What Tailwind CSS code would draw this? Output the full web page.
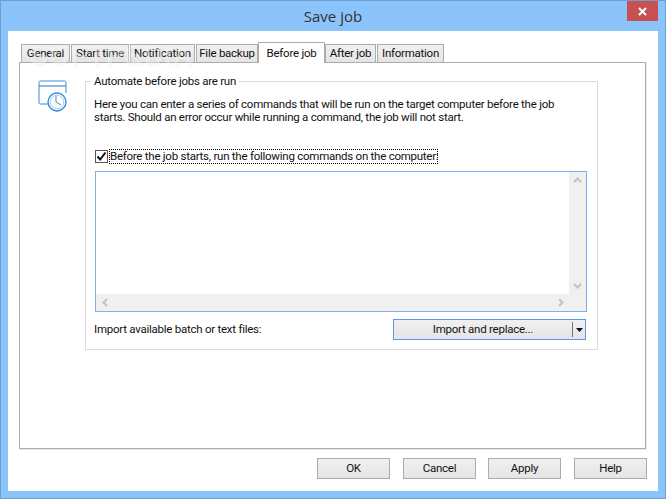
<!doctype html>
<html>
<head>
<meta charset="utf-8">
<script src="https://cdn.jsdelivr.net/npm/@tailwindcss/browser@4"></script>
</head>
<body class="m-0 bg-white">
<div class="relative flex h-[499px] w-[666px] flex-col overflow-hidden border border-[#6f9fd0] bg-[#8bc4fa] font-['Roboto',sans-serif] text-[11.5px] leading-[13px] text-[#111] tracking-[-0.25px]">
  <header class="relative flex h-[30px] shrink-0 items-center justify-center font-['Open_Sans',sans-serif] text-[15px] tracking-normal text-[#333]">
    <span class="pt-[1px]">Save job</span>
    <div class="absolute right-[7px] top-0 flex h-[20px] w-[31px] items-center justify-center bg-[#c75050]">
      <svg width="9" height="9" viewBox="0 0 9 9"><path d="M1 1l7 7M8 1l-7 7" stroke="#fff" stroke-width="2"/></svg>
    </div>
  </header>
  <main class="relative mx-[7px] flex h-[460px] flex-col bg-white px-[11px] pt-[11px]">
    <nav class="relative z-10 flex h-[21px] items-end pl-[2px]">
      <div class="mb-px mr-px flex h-[18px] w-[49px] items-center justify-center whitespace-nowrap border border-b-0 border-[#acacac] bg-gradient-to-b from-[#f0f0f0] to-[#e5e5e5]">General</div>
      <div class="mb-px mr-px flex h-[18px] w-[58px] items-center justify-center whitespace-nowrap border border-b-0 border-[#acacac] bg-gradient-to-b from-[#f0f0f0] to-[#e5e5e5]">Start time</div>
      <div class="mb-px mr-px flex h-[18px] w-[65px] items-center justify-center whitespace-nowrap border border-b-0 border-[#acacac] bg-gradient-to-b from-[#f0f0f0] to-[#e5e5e5]">Notification</div>
      <div class="mb-px flex h-[18px] w-[62px] items-center justify-center whitespace-nowrap border border-b-0 border-[#acacac] bg-gradient-to-b from-[#f0f0f0] to-[#e5e5e5]">File backup</div>
      <div class="flex h-[21px] w-[67px] items-center justify-center whitespace-nowrap border border-b-0 border-[#acacac] bg-white">Before job</div>
      <div class="mb-px mr-px flex h-[18px] w-[51px] items-center justify-center whitespace-nowrap border border-b-0 border-[#acacac] bg-gradient-to-b from-[#f0f0f0] to-[#e5e5e5]">After job</div>
      <div class="mb-px flex h-[18px] w-[67px] items-center justify-center whitespace-nowrap border border-b-0 border-[#acacac] bg-gradient-to-b from-[#f0f0f0] to-[#e5e5e5]">Information</div>
    </nav>
    <section class="-mt-px flex h-[387px] w-[627px] border border-[#acacac] pl-[18px] pt-[16px] shadow-[1px_1px_0_#e8e8e8]">
      <svg class="mt-[1px] shrink-0" width="30" height="32" viewBox="0 0 30 32" fill="none" stroke="#3b8bd6">
        <path d="M10 24H2.500a1.500 1.500 0 0 1-1.500-1.500V2.500A1.500 1.500 0 0 1 2.500 1h24A1.500 1.500 0 0 1 28 2.500V13" stroke-width="1"/>
        <path d="M1 6h27" stroke-width="1.200"/>
        <circle cx="19" cy="22" r="9" fill="#fff" stroke-width="1.400"/>
        <circle cx="19" cy="22" r="6.800" stroke="#a9cdee" stroke-width="1"/>
        <path d="M18 16v6l5 3" stroke-width="1"/>
      </svg>
      <div class="relative ml-[17px] mt-[2px] h-[269px] w-[513px] border border-[#dcdcdc] px-[8px] pt-[16px]">
        <div class="absolute -top-[7px] left-[5px] bg-white px-[3px]">Automate before jobs are run</div>
        <p class="m-0 whitespace-nowrap">Here you can enter a series of commands that will be run on the target computer before the job<br>starts. Should an error occur while running a command, the job will not start.</p>
        <div class="mt-[25px] flex h-[15px] items-center pl-[1px]">
          <span class="flex h-[13px] w-[13px] shrink-0 items-center justify-center border border-[#555] bg-white">
            <svg width="11" height="11" viewBox="0 0 11 11"><path d="M1.500 5.500l2.700 3L9.500 1.500" fill="none" stroke="#111" stroke-width="2"/></svg>
          </span>
          <span class="ml-[1px] flex h-[15px] w-[329px] items-center whitespace-nowrap border border-dotted border-black">Before the job starts, run the following commands on the computer:</span>
        </div>
        <div class="ml-px mt-[7px] flex h-[141px] w-[492px] flex-col border border-[#7fb0e6] bg-[#f0f0f0]">
          <div class="flex min-h-0 flex-1">
            <div class="flex-1 bg-white"></div>
            <div class="flex w-[17px] flex-col items-center justify-between py-[5px]">
              <svg width="9" height="6" viewBox="0 0 9 6"><path d="M1 5l3.500-3.500L8 5" fill="none" stroke="#c2c2c2" stroke-width="2"/></svg>
              <svg width="9" height="6" viewBox="0 0 9 6"><path d="M1 1l3.500 3.500L8 1" fill="none" stroke="#c2c2c2" stroke-width="2"/></svg>
            </div>
          </div>
          <div class="flex h-[17px] items-center justify-between pl-[6px] pr-[22px]">
            <svg width="6" height="9" viewBox="0 0 6 9"><path d="M5 1L1.500 4.500 5 8" fill="none" stroke="#c2c2c2" stroke-width="2"/></svg>
            <svg width="6" height="9" viewBox="0 0 6 9"><path d="M1 1l3.500 3.500L1 8" fill="none" stroke="#c2c2c2" stroke-width="2"/></svg>
          </div>
        </div>
        <div class="mt-[7px] flex h-[21px] items-center justify-between pr-[3px]">
          <span>Import available batch or text files:</span>
          <div class="flex h-[21px] w-[193px] items-center border border-[#569de5] bg-gradient-to-b from-[#f0f0f0] to-[#e5e5e5]">
            <span class="flex-1 pl-[-1px] text-center">Import and replace...</span>
            <span class="h-[15px] w-px bg-[#777]"></span>
            <span class="flex w-[12px] justify-center"><svg width="7" height="4" viewBox="0 0 7 4"><path d="M0 0h7L3.500 4z" fill="#111"/></svg></span>
          </div>
        </div>
      </div>
    </section>
    <footer class="mt-[9px] flex h-[21px] w-[628px] justify-end">
      <div class="flex h-[21px] w-[73px] items-center justify-center border border-[#acacac] bg-gradient-to-b from-[#f0f0f0] to-[#e5e5e5]">OK</div>
      <div class="ml-[13px] flex h-[21px] w-[73px] items-center justify-center border border-[#acacac] bg-gradient-to-b from-[#f0f0f0] to-[#e5e5e5]">Cancel</div>
      <div class="ml-[12px] flex h-[21px] w-[73px] items-center justify-center border border-[#acacac] bg-gradient-to-b from-[#f0f0f0] to-[#e5e5e5]">Apply</div>
      <div class="ml-[13px] flex h-[21px] w-[73px] items-center justify-center border border-[#acacac] bg-gradient-to-b from-[#f0f0f0] to-[#e5e5e5]">Help</div>
    </footer>
    <span class="pointer-events-none absolute left-[22px] top-[10px] z-20 font-['Liberation_Sans',sans-serif] text-[27px] font-bold leading-[30px] tracking-[1px] text-white/40 [text-shadow:1px_1px_0_rgba(0,0,0,0.05)]">SOFTPEDIA</span>
  </main>
</div>
</body>
</html>
